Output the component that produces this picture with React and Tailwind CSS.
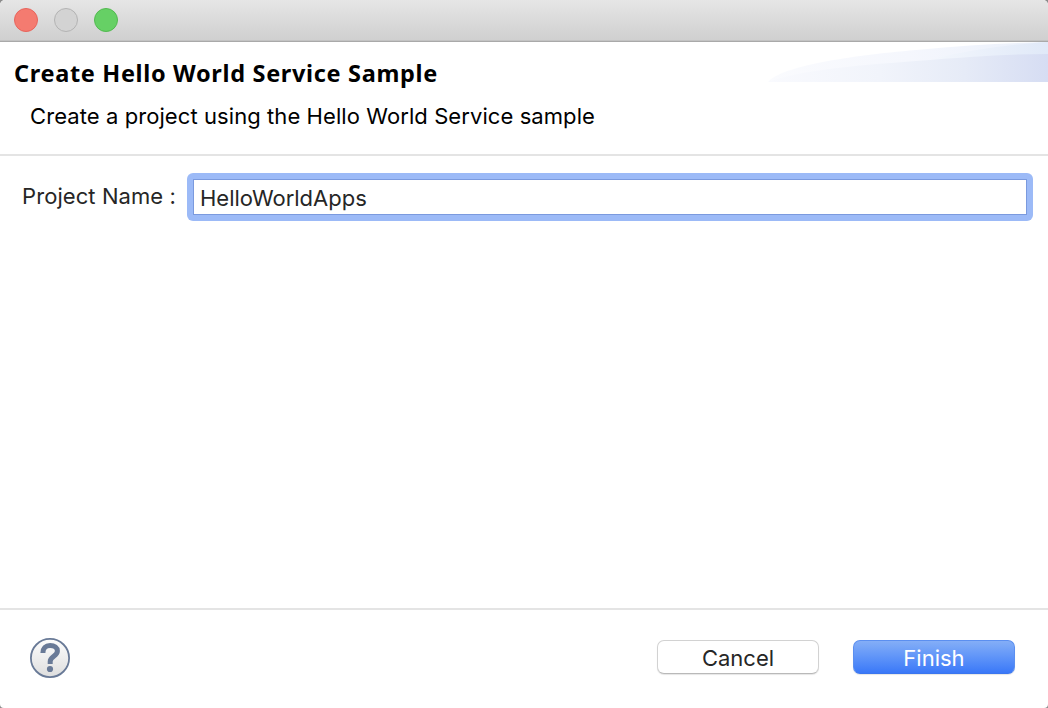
function TrafficLight({ className }) {
  return <span className={`size-6 rounded-full border ${className}`} />;
}

function TitleBar() {
  return (
    <div className="flex h-[42px] shrink-0 items-start gap-4 border-b border-[#a9a9a9] bg-linear-to-b from-[#e6e6e6] to-[#cfcfcf] px-3.5 pt-2 shadow-[inset_0_-1px_0_#c3c3c3]">
      <TrafficLight className="border-[#e8645c] bg-[#f47b70]" />
      <TrafficLight className="border-[#b3b3b3] bg-[#d3d3d3]" />
      <TrafficLight className="border-[#52ba50] bg-[#66d065]" />
    </div>
  );
}

function BannerSwoosh() {
  return (
    <svg className="h-10 w-[280px] shrink-0" viewBox="0 0 280 40" aria-hidden="true">
      <defs>
        <linearGradient id="swooshBack" x1="0" x2="1">
          <stop offset="0" stopColor="#fafbfe" />
          <stop offset="0.5" stopColor="#f5f7fd" />
          <stop offset="1" stopColor="#eaf0fb" />
        </linearGradient>
        <linearGradient id="swooshMid" x1="0" x2="1">
          <stop offset="0" stopColor="#f5f8fd" />
          <stop offset="1" stopColor="#e0e9f8" />
        </linearGradient>
        <linearGradient id="swooshFront" x1="0" x2="1">
          <stop offset="0" stopColor="#f9fafe" />
          <stop offset="0.4" stopColor="#f1f4fb" />
          <stop offset="0.7" stopColor="#e6ebf7" />
          <stop offset="1" stopColor="#d6ddf3" />
        </linearGradient>
      </defs>
      <path d="M0 40C14 24 80 14 148 8C200 3 240 1 280 0V40Z" fill="url(#swooshBack)" />
      <path d="M150 20C190 11 220 4 280 0V30H150Z" fill="url(#swooshMid)" />
      <path d="M0 40C30 29 80 24 148 19C200 15 240 12 280 12V40Z" fill="url(#swooshFront)" />
    </svg>
  );
}

function Header() {
  return (
    <header className="flex h-[114px] shrink-0 justify-between border-b-2 border-[#e4e4e4]">
      <div className="flex flex-col whitespace-nowrap text-black">
        <h1 className="mt-[15px] pl-3.5 font-['Noto_Sans',sans-serif] text-[23.5px] leading-8 font-bold tracking-[0.67px]">
          Create Hello World Service Sample
        </h1>
        <p className="mt-[13px] pl-[30px] text-[22px] leading-7 tracking-[0.08px]">
          Create a project using the Hello World Service sample
        </p>
      </div>
      <BannerSwoosh />
    </header>
  );
}

function ProjectForm() {
  return (
    <main className="flex grow items-start pt-[17px] pr-[15px] pl-[22px]">
      <label
        htmlFor="project-name"
        className="w-[165px] shrink-0 pt-[9px] text-[22px] leading-7 tracking-[0.08px] whitespace-nowrap text-[#262626]"
      >
        Project Name :
      </label>
      <div className="flex h-12 grow rounded-[6px] bg-[#9cbaf7] p-[6px]">
        <input
          id="project-name"
          type="text"
          defaultValue="HelloWorldApps"
          className="h-9 w-full border border-[#7b9ade] bg-white px-1.5 pt-px text-[22px] text-[#262626] outline-none"
        />
      </div>
    </main>
  );
}

function HelpIcon() {
  return (
    <svg className="size-10" viewBox="0 0 40 40" aria-hidden="true">
      <defs>
        <linearGradient id="helpFill" x1="0" y1="0" x2="0" y2="1">
          <stop offset="0" stopColor="#fdfdfd" />
          <stop offset="1" stopColor="#dedede" />
        </linearGradient>
      </defs>
      <circle cx="20" cy="20" r="19.1" fill="url(#helpFill)" stroke="#697a97" strokeWidth="1.8" />
      <path
        d="M12.9 15C12.9 10 15.5 7.6 20.1 7.6C24.6 7.6 27.4 9.7 27.4 13C27.4 18.1 20.2 18.3 20.2 23.4V26"
        fill="none"
        stroke="#697a97"
        strokeWidth="5"
      />
      <circle cx="20" cy="31" r="3.1" fill="#697a97" />
    </svg>
  );
}

function Footer() {
  return (
    <footer className="flex h-[100px] shrink-0 items-start border-t-2 border-[#e4e4e4] pr-[33px] pl-[30px]">
      <button type="button" aria-label="Help" className="mt-7">
        <HelpIcon />
      </button>
      <div className="mt-[30px] ml-auto flex gap-[34px] text-[22px] leading-none">
        <button
          type="button"
          className="flex h-[34px] w-[162px] items-center justify-center rounded-[7px] border border-[#d2d2d2] border-b-[#b9b9b9] bg-white pt-0.5 text-[#262626] shadow-[0_1px_1px_rgba(0,0,0,0.1)]"
        >
          Cancel
        </button>
        <button
          type="button"
          className="flex h-[34px] w-[162px] items-center justify-center rounded-[7px] border border-[#5b8ff0] border-b-[#3b76ee] bg-linear-to-b from-[#84aef7] to-[#3a78f8] pt-0.5 text-white shadow-[0_1px_1px_rgba(0,0,0,0.1)]"
        >
          Finish
        </button>
      </div>
    </footer>
  );
}

export default function App() {
  return (
    <div className="h-[708px] w-[1048px] bg-[#8b8b8b]">
      <div className="flex h-full flex-col overflow-hidden rounded-t-[5px] rounded-b-[4px] bg-white font-['Inter',sans-serif]">
        <TitleBar />
        <Header />
        <ProjectForm />
        <Footer />
      </div>
    </div>
  );
}
